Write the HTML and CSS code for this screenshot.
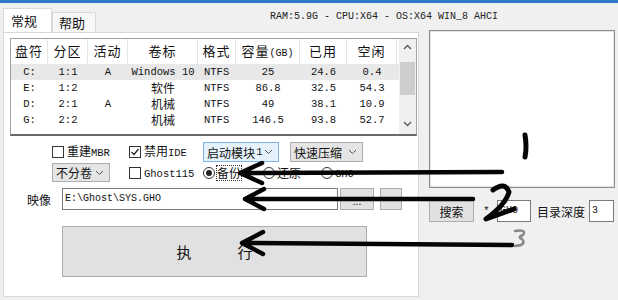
FILE: index.html
```html
<!DOCTYPE html>
<html lang="zh-CN">
<head>
    <meta charset="UTF-8">
    <title>CGI</title>
    <link rel="stylesheet" href="styles.css">
</head>
<body>
    <!-- Blue edge of the title bar -->
    <div class="titlebar"></div>

    <!-- Tabs and system info line -->
    <div class="header">
        <div class="tab active">常规</div>
        <div class="tab">帮助</div>
        <div class="sysinfo">RAM:5.9G - CPU:X64 - OS:X64 WIN_8 AHCI</div>
    </div>

    <div class="main">
        <!-- Tab page -->
        <div class="panel">
            <div class="list">
                <div class="list-body">
                    <div class="list-row list-head">
                        <span>盘符</span><span>分区</span><span>活动</span><span>卷标</span>
                        <span>格式</span><span>容量<small>(GB)</small></span><span>已用</span><span>空闲</span>
                    </div>
                    <div class="list-row selected">
                        <span>C:</span><span>1:1</span><span>A</span><span>Windows 10</span>
                        <span class="fmt">NTFS</span><span>25</span><span>24.6</span><span>0.4</span>
                    </div>
                    <div class="list-row">
                        <span>E:</span><span>1:2</span><span></span><span class="cjk">软件</span>
                        <span class="fmt">NTFS</span><span>86.8</span><span>32.5</span><span>54.3</span>
                    </div>
                    <div class="list-row">
                        <span>D:</span><span>2:1</span><span>A</span><span class="cjk">机械</span>
                        <span class="fmt">NTFS</span><span>49</span><span>38.1</span><span>10.9</span>
                    </div>
                    <div class="list-row">
                        <span>G:</span><span>2:2</span><span></span><span class="cjk">机械</span>
                        <span class="fmt">NTFS</span><span>146.5</span><span>93.8</span><span>52.7</span>
                    </div>
                </div>
                <div class="scrollbar">
                    <svg class="sb-arrow" width="17" height="17" viewBox="0 0 17 17"><polyline points="5,10 8.5,6.5 12,10" fill="none" stroke="#606060" stroke-width="1.5"/></svg>
                    <div class="sb-thumb"></div>
                    <svg class="sb-arrow sb-down" width="17" height="17" viewBox="0 0 17 17"><polyline points="5,7 8.5,10.5 12,7" fill="none" stroke="#606060" stroke-width="1.5"/></svg>
                </div>
            </div>

            <!-- Options -->
            <div class="opt-row">
                <div class="check w77"><span class="box"></span><span class="lbl">重建<span class="en">MBR</span></span></div>
                <div class="check w74"><span class="box checked"><svg width="10" height="10" viewBox="0 0 10 10"><polyline points="1.5,5 4,7.5 8.5,2" fill="none" stroke="#222" stroke-width="1.3"/></svg></span><span class="lbl">禁用<span class="en">IDE</span></span></div>
                <div class="select focus w76">启动模块<span class="en">1</span><svg width="9" height="6" viewBox="0 0 9 6"><polyline points="1,1 4.5,4.5 8,1" fill="none" stroke="#555" stroke-width="1"/></svg></div>
                <div class="select w73">快速压缩<svg width="9" height="6" viewBox="0 0 9 6"><polyline points="1,1 4.5,4.5 8,1" fill="none" stroke="#555" stroke-width="1"/></svg></div>
            </div>
            <div class="opt-row second">
                <div class="select w58">不分卷<svg width="9" height="6" viewBox="0 0 9 6"><polyline points="1,1 4.5,4.5 8,1" fill="none" stroke="#555" stroke-width="1"/></svg></div>
                <div class="check w74"><span class="box"></span><span class="lbl"><span class="en">Ghost115</span></span></div>
                <div class="radio w60"><span class="dot on"></span><span class="lbl focus-ring">备份</span></div>
                <div class="radio w58"><span class="dot"></span><span class="lbl">还原</span></div>
                <div class="radio"><span class="dot"></span><span class="lbl"><span class="en">GHO</span></span></div>
            </div>

            <!-- Image path -->
            <div class="image-row">
                <span class="image-label">映像</span>
                <div class="path-input">E:\Ghost\SYS.GHO</div>
                <button class="btn browse">...</button>
                <button class="btn small"></button>
            </div>

            <button class="btn exec"><span>执</span><span>行</span></button>
        </div>

        <!-- Right side: preview and search -->
        <div class="side">
            <div class="preview"></div>
            <div class="search-row">
                <button class="btn search">搜索</button>
                <span class="star">*</span>
                <div class="field ext">GHO</div>
                <span class="depth-label">目录深度</span>
                <div class="field depth">3</div>
            </div>
        </div>
    </div>

    <!-- Hand drawn marks over the screenshot -->
    <svg class="marks" width="618" height="300" viewBox="0 0 618 300">
        <g fill="none" stroke="#050505" stroke-linecap="round" stroke-linejoin="round">
            <path d="M502 172 L240 173 M262 163 L240 173 L262 183" stroke-width="4.5"/>
            <path d="M473 199 L245 199 M264 189 L245 199 L264 209" stroke-width="4.5"/>
            <path d="M512 245 L242 243 M263 232 L242 243 L263 254" stroke-width="4.5"/>
            <path d="M525 135 Q527 147 525 157" stroke-width="5"/>
            <path d="M493 190 Q505 181 509 192 Q506 204 486 219 L514 209" stroke-width="5"/>
            <path d="M515 231 Q527 229 523 235 Q517 237 522 239 Q527 245 515 246" stroke="#444" stroke-width="2.5" opacity="0.6"/>
        </g>
    </svg>
</body>
</html>
```

FILE: styles.css
```css
/* Window base */
body {
    margin: 0;
    width: 618px;
    height: 300px;
    overflow: hidden;
    position: relative;
    background: #f0f0f0;
    font-family: "Noto Sans CJK SC", sans-serif;
    font-size: 12px;
    color: #111;
}

.titlebar {
    height: 3px;
    background: #2b79c8;
}

/* Tabs row */
.header {
    height: 29px;
    display: flex;
    align-items: flex-end;
    padding-left: 3px;
}

.tab {
    height: 20px;
    width: 44px;
    box-sizing: border-box;
    border: 1px solid #d9d9d9;
    border-bottom: none;
    background: #f7f7f7;
    padding-left: 6px;
    font-size: 13px;
    line-height: 19px;
}

.tab.active {
    height: 24px;
    width: 49px;
    background: #fff;
    line-height: 23px;
    padding-left: 7px;
}

.sysinfo {
    align-self: flex-start;
    margin-top: 8px;
    margin-left: 174px;
    font-family: "Liberation Mono", monospace;
    font-size: 10px;
    line-height: 12px;
    color: #222;
}

/* Main area */
.main {
    display: flex;
    padding-left: 3px;
}

.panel {
    width: 416px;
    height: 265px;
    box-sizing: border-box;
    background: #fff;
    border: 1px solid #d9d9d9;
    padding: 5px 0 0 6px;
}

/* Partition list */
.list {
    width: 407px;
    height: 98px;
    box-sizing: border-box;
    border: 1px solid #a0a0a0;
    border-bottom: 2px solid #6a6a6a;
    display: flex;
    overflow: hidden;
}

.list-body {
    width: 388px;
    overflow: hidden;
}

.list-row {
    display: grid;
    grid-template-columns: 37px 40px 40px 70px 38px 64px 47px 50px;
    height: 16px;
    line-height: 16px;
    font-family: "Liberation Mono", "Noto Sans CJK SC", monospace;
    font-size: 10.5px;
    text-align: center;
    white-space: nowrap;
}

.list-row .cjk {
    font-family: "Noto Sans CJK SC", sans-serif;
    font-size: 12px;
}

.list-row .fmt {
    text-align: left;
    padding-left: 6px;
}

.list-head {
    height: 25px;
    line-height: 24px;
    font-family: "Noto Sans CJK SC", sans-serif;
    font-size: 13px;
    letter-spacing: 1px;
}

.list-head span {
    border-right: 1px solid #e5e5e5;
}

.list-head small {
    font-family: "Liberation Mono", monospace;
    font-size: 10px;
    letter-spacing: 0;
}

.list-row.selected {
    background: #e8e8e8;
}

.scrollbar {
    width: 17px;
    background: #f0f0f0;
    display: flex;
    flex-direction: column;
}

.sb-arrow {
    display: block;
}

.sb-thumb {
    margin: 6px 1px 0;
    height: 33px;
    background: #cdcdcd;
}

.sb-down {
    margin-top: auto;
    margin-bottom: 2px;
}

/* Option rows */
.opt-row {
    display: flex;
    align-items: center;
    margin: 6px 0 0 42px;
    height: 20px;
}

.opt-row.second {
    margin-top: 1px;
    height: 19px;
}

.w77 { width: 77px; }
.w74 { width: 74px; }
.w76 { width: 76px; margin-right: 11px; }
.w73 { width: 73px; }
.w58 { width: 58px; }
.opt-row .w58:first-child { margin-right: 19px; }
.w60 { width: 60px; }

.check,
.radio {
    display: flex;
    align-items: center;
    height: 16px;
}

.box {
    width: 12px;
    height: 12px;
    box-sizing: border-box;
    border: 1px solid #333;
    background: #fff;
    margin-right: 3px;
    display: flex;
    align-items: center;
    justify-content: center;
}

.dot {
    width: 12px;
    height: 12px;
    box-sizing: border-box;
    border: 1px solid #333;
    border-radius: 50%;
    background: #fff;
    margin-right: 2px;
    display: flex;
    align-items: center;
    justify-content: center;
}

.dot.on::after {
    content: "";
    width: 6px;
    height: 6px;
    border-radius: 50%;
    background: #222;
}

.lbl {
    font-size: 12px;
    line-height: 14px;
    white-space: nowrap;
}

.en {
    font-family: "Liberation Mono", monospace;
    font-size: 10.5px;
}

.focus-ring {
    outline: 1px dotted #333;
    outline-offset: 0;
}

.select {
    height: 20px;
    box-sizing: border-box;
    border: 1px solid #adadad;
    background: #e5e5e5;
    display: flex;
    align-items: center;
    justify-content: space-between;
    padding: 0 5px 0 3px;
    font-size: 12px;
    white-space: nowrap;
}

.select.focus {
    background: #e5f1fb;
    border-color: #7eb4ea;
}

.second .select {
    height: 19px;
}

/* Image row */
.image-row {
    display: flex;
    align-items: center;
    margin: 6px 0 0 17px;
    height: 22px;
}

.image-label {
    width: 35px;
    font-size: 12px;
}

.path-input {
    width: 276px;
    height: 22px;
    box-sizing: border-box;
    border: 1px solid #7a7a7a;
    background: #fff;
    padding-left: 2px;
    font-family: "Liberation Mono", monospace;
    font-size: 10px;
    line-height: 20px;
}

.btn {
    box-sizing: border-box;
    border: 1px solid #adadad;
    background: #e1e1e1;
    padding: 0;
    font-family: "Noto Sans CJK SC", sans-serif;
    color: #111;
}

.browse {
    width: 34px;
    height: 22px;
    margin-left: 2px;
    font-size: 10px;
    line-height: 14px;
    padding-top: 4px;
}

.small {
    width: 22px;
    height: 22px;
    margin-left: 6px;
}

.exec {
    display: flex;
    justify-content: center;
    align-items: center;
    gap: 46px;
    width: 305px;
    height: 51px;
    margin: 16px 0 0 52px;
    font-size: 15px;
}

/* Right side */
.side {
    width: 186px;
    margin: -2px 0 0 10px;
}

.preview {
    height: 158px;
    box-sizing: border-box;
    border: 1px solid #8c8c8c;
    box-shadow: inset 0 0 0 1px #e3e3e3;
    background: #fff;
}

.search-row {
    display: flex;
    align-items: center;
    margin-top: 12px;
    height: 22px;
}

.search {
    width: 45px;
    height: 22px;
    font-size: 12px;
}

.star {
    margin-left: 9px;
    width: 14px;
    font-family: "Liberation Mono", monospace;
    font-size: 11px;
}

.field {
    height: 22px;
    box-sizing: border-box;
    border: 1px solid #7a7a7a;
    background: #fff;
    padding-left: 2px;
    font-family: "Liberation Mono", monospace;
    font-size: 10px;
    line-height: 20px;
}

.ext {
    width: 34px;
}

.depth-label {
    margin-left: 6px;
    width: 52px;
    font-size: 12px;
}

.depth {
    width: 25px;
}

/* Annotation layer over the window */
.marks {
    position: absolute;
    top: 0;
    left: 0;
    pointer-events: none;
}
```
